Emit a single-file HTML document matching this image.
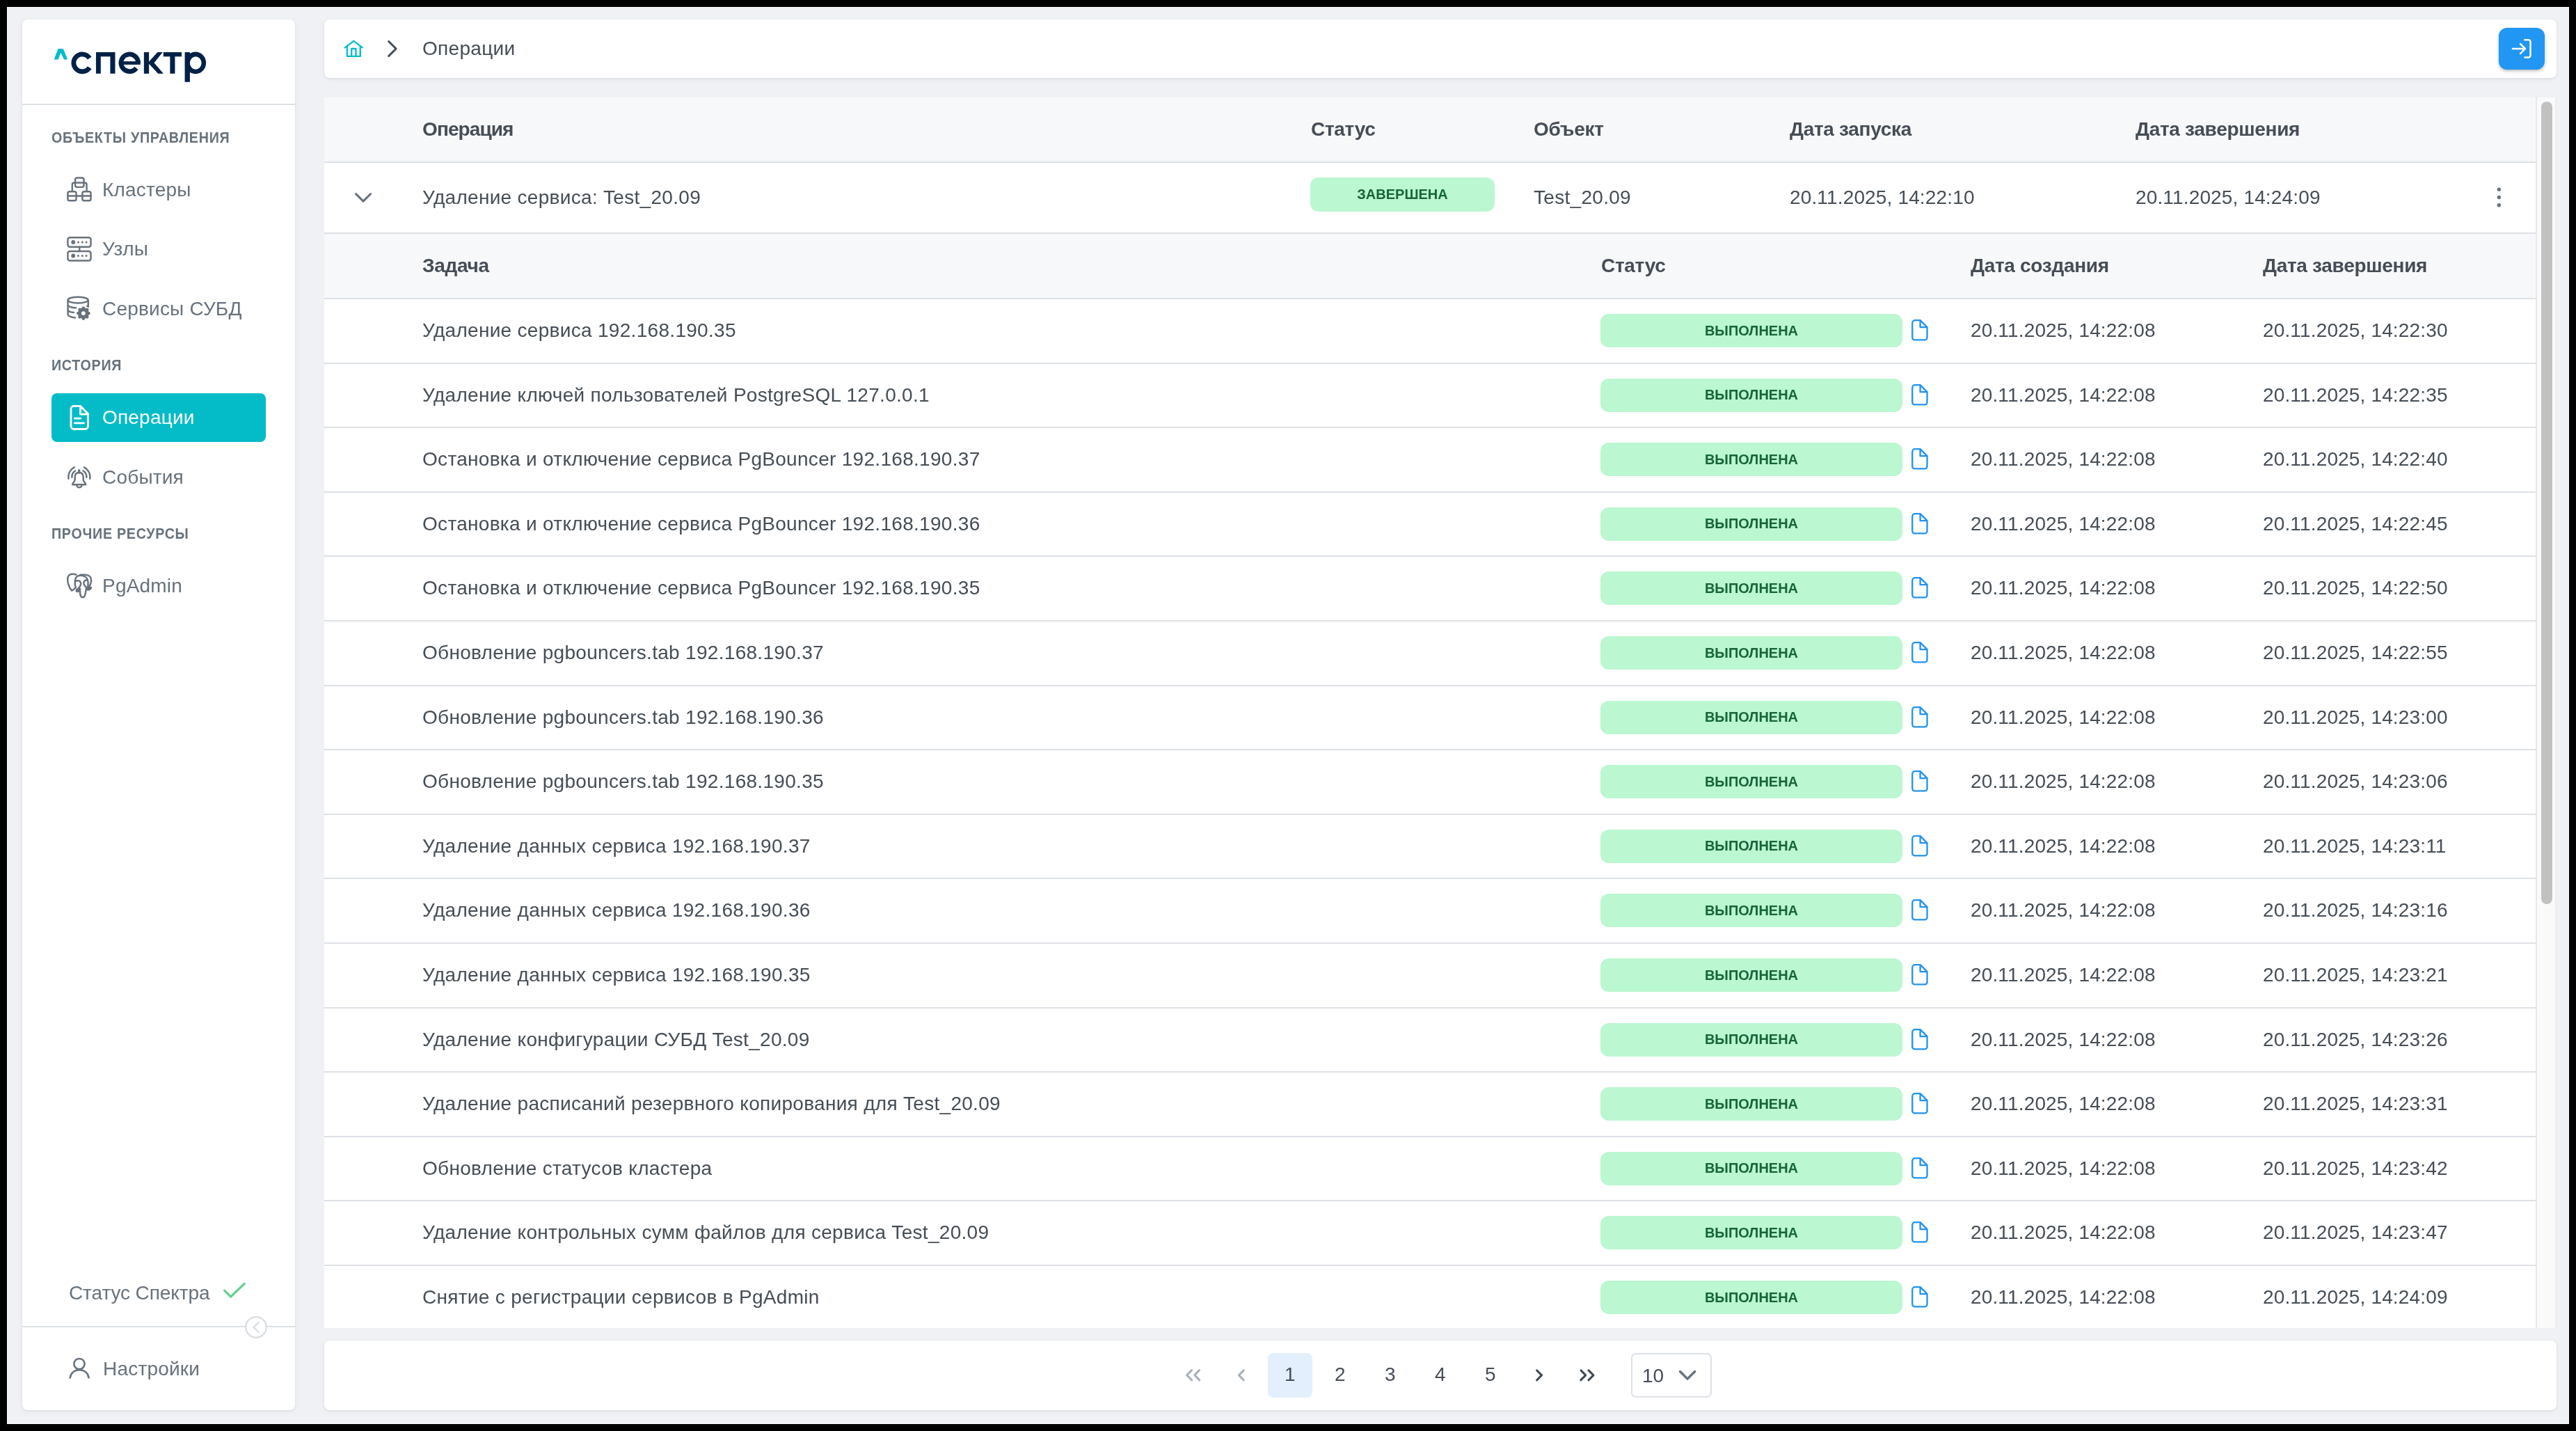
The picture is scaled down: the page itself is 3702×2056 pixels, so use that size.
<!DOCTYPE html>
<html><head><meta charset="utf-8"><style>
*{box-sizing:content-box;}
html,body{margin:0;padding:0;}
body{width:3702px;height:2056px;background:#000;position:relative;overflow:hidden;font-family:"Liberation Sans",sans-serif;}
#app{position:absolute;left:0;top:0;width:3702px;height:2056px;will-change:transform;}
#frame{position:absolute;left:10px;top:10px;width:3680px;height:2034px;border:1px solid #fdfdfe;background:#eff1f4;}
.card{position:absolute;background:#fff;border-radius:8px;box-shadow:0 1px 3px rgba(30,40,60,0.07),0 2px 8px rgba(30,40,60,0.05);}
.ic{position:absolute;overflow:visible;}
.hl{position:absolute;height:2px;background:#dde1e6;}
.t28,.nav,.th,.sec{position:absolute;white-space:nowrap;}
.t28{font-size:28px;line-height:28px;color:#454d56;letter-spacing:0.3px;}
.nav{font-size:28px;line-height:28px;color:#67727c;letter-spacing:0.2px;}
.th{font-size:28px;line-height:28px;color:#454d56;font-weight:bold;letter-spacing:-0.3px;}
.sec{font-size:22px;line-height:22px;color:#67727c;font-weight:bold;letter-spacing:0.8px;transform:scaleX(0.895);transform-origin:0 0;}
.badge{position:absolute;background:#bbf7d0;color:#16653a;border-radius:12px;font-size:20px;font-weight:bold;display:flex;align-items:center;justify-content:center;letter-spacing:0px;}
.row{position:absolute;left:0;width:3178px;height:92.6px;}
</style></head>
<body><div id="app"><div id="frame"></div>
<div class="card" style="left:32px;top:28px;width:392px;height:1998px;"></div><svg class="ic" style="left:60px;top:50px;width:260px;height:80px;" viewBox="0 0 2576 793"><g fill="#002147">
<path d="M680.2,333 A123,123 0 1 0 680.2,467" fill="none" stroke="#002147" stroke-width="68"/>
<path d="M772,248 H1045 V553 H975 V310 H840 V553 H772 Z"/>
<path d="M1373,401 A122,122 0 1 0 1347,475" fill="none" stroke="#002147" stroke-width="67"/>
<rect x="1160" y="378" width="245" height="47"/>
<rect x="1455" y="248" width="72" height="305"/>
<polygon points="1520,388 1649,249 1722,249 1600,400 1733,552 1657,552 1520,407"/>
<path d="M1732,248 H1992 V310 H1897 V553 H1827 V310 H1732 Z"/>
<rect x="2037" y="248" width="73" height="424"/>
<path fill-rule="evenodd" d="M2040,400 A150,157 0 1 0 2340,400 A150,157 0 1 0 2040,400 Z M2109,402 A83,92 0 1 0 2275,402 A83,92 0 1 0 2109,402 Z"/>
</g>
<polygon fill="#00bccb" points="232,198 305,198 368,353 318,353 269,258 233,353 175,353"/></svg><div class="hl" style="left:32px;top:149px;width:392px;"></div><div class="sec" style="left:74px;top:187px;">ОБЪЕКТЫ УПРАВЛЕНИЯ</div><div class="sec" style="left:74px;top:514px;">ИСТОРИЯ</div><div class="sec" style="left:74px;top:756px;">ПРОЧИЕ РЕСУРСЫ</div><svg class="ic" style="left:86px;top:240px;width:60px;height:60px;" viewBox="0 0 1431 1431"><g fill="none" stroke="#67727c" stroke-width="58" stroke-linecap="round" stroke-linejoin="round">
<rect x="527" y="368" width="296" height="320" rx="60"/>
<path d="M527,535 H823"/>
<path d="M425,810 V600 A65,65 0 0 1 490,535 H527 M823,535 H855 A65,65 0 0 1 920,600 V810"/>
<rect x="272" y="842" width="290" height="310" rx="60"/>
<rect x="772" y="842" width="290" height="310" rx="60"/>
<path d="M272,990 H1062"/>
</g></svg><div class="nav" style="left:147px;top:259px;">Кластеры</div><svg class="ic" style="left:86px;top:326px;width:60px;height:60px;" viewBox="0 0 1431 1431"><g fill="none" stroke="#67727c" stroke-width="58" stroke-linecap="round" stroke-linejoin="round">
<rect x="272" y="365" width="790" height="322" rx="70"/>
<rect x="272" y="835" width="790" height="322" rx="70"/>
<path d="M675,690 V835"/>
</g><g fill="#67727c">
<circle cx="458" cy="525" r="70"/><circle cx="630" cy="525" r="36"/><circle cx="770" cy="525" r="36"/><circle cx="908" cy="525" r="36"/>
<circle cx="458" cy="990" r="70"/><circle cx="630" cy="990" r="36"/><circle cx="770" cy="990" r="36"/><circle cx="908" cy="990" r="36"/>
</g></svg><div class="nav" style="left:147px;top:344px;">Узлы</div><svg class="ic" style="left:86px;top:412px;width:60px;height:60px;" viewBox="0 0 1431 1431"><g fill="none" stroke="#67727c" stroke-width="58">
<ellipse cx="622" cy="455" rx="347" ry="105"/>
<path d="M275,455 V940 C275,1000 400,1045 550,1065"/>
<path d="M275,635 C300,690 420,718 580,725"/>
<path d="M275,800 C300,855 390,878 498,882"/>
<path d="M972,455 V675 L915,655"/>
</g><path fill="#67727c" fill-rule="evenodd" d="M994,859 L1037,870 L1037,946 L994,957 L974,1004 L997,1043 L943,1097 L904,1074 L857,1094 L846,1137 L770,1137 L759,1094 L712,1074 L673,1097 L619,1043 L642,1004 L622,957 L579,946 L579,870 L622,859 L642,812 L619,773 L673,719 L712,742 L759,722 L770,679 L846,679 L857,722 L904,742 L943,719 L997,773 L974,812 Z M738,908 A70,70 0 1 0 878,908 A70,70 0 1 0 738,908 Z"/></svg><div class="nav" style="left:147px;top:430px;">Сервисы СУБД</div><div style="position:absolute;left:74px;top:565px;width:308px;height:70px;background:#03bcc8;border-radius:8px;"></div><svg class="ic" style="left:86px;top:570px;width:60px;height:60px;" viewBox="0 0 1431 1431"><g fill="none" stroke="#fff" stroke-width="68" stroke-linecap="round" stroke-linejoin="round">
<path d="M705,320 H480 A100,100 0 0 0 380,420 V1010 A100,100 0 0 0 480,1110 H865 A100,100 0 0 0 965,1010 V585 Z"/>
<path d="M705,320 V600 H965"/>
<path d="M510,742 H712"/><path d="M510,902 H822"/>
</g></svg><div class="nav" style="left:147px;top:586px;color:#fff">Операции</div><svg class="ic" style="left:86px;top:656px;width:60px;height:60px;" viewBox="0 0 1431 1431"><g fill="none" stroke="#67727c" stroke-width="58" stroke-linecap="round" stroke-linejoin="round">
<path d="M660,550 C568,550 515,618 515,720 V800 C515,855 432,900 432,962 H888 C888,900 805,855 805,800 V720 C805,618 752,550 660,550 Z"/>
<path d="M660,470 V550" stroke-width="78"/>
<path d="M580,992 A85,66 0 0 0 750,992"/>
<path d="M528,488 A250,250 0 0 0 414,712"/>
<path d="M495,366 A375,375 0 0 0 297,760"/>
<path d="M800,488 A250,250 0 0 1 914,712"/>
<path d="M835,366 A375,375 0 0 1 1033,760"/>
</g></svg><div class="nav" style="left:147px;top:672px;">События</div><svg class="ic" style="left:86px;top:812px;width:60px;height:60px;" viewBox="0 0 1431 1431"><g fill="none" stroke="#67727c" stroke-width="58" stroke-linecap="round" stroke-linejoin="round">
<path d="M565,325 C450,295 320,300 280,400 C240,520 300,760 410,875 C470,860 510,800 545,760"/>
<path d="M545,760 C505,650 495,470 590,385 C690,320 880,350 945,480 C975,560 968,700 960,770"/>
<path d="M690,335 C800,320 990,300 1060,430 C1090,540 1050,680 990,770 H1075 C1050,850 960,865 905,800"/>
<path d="M690,810 C690,930 680,1100 785,1105 C880,1105 880,920 905,800"/>
<path d="M530,550 C600,515 705,520 720,620 C725,700 670,760 630,800 C580,820 560,860 575,900 C620,920 680,880 690,810"/>
<path d="M955,520 C860,495 800,560 822,640 C845,705 905,760 960,775"/>
</g><g fill="#67727c"><path d="M565,880 C560,835 620,815 700,812 V905 C640,925 572,915 565,880 Z"/><path d="M905,785 H1085 C1065,850 995,872 925,872 Z"/></g></svg><div class="nav" style="left:147px;top:828px;">PgAdmin</div><div class="nav" style="left:99px;top:1844px;letter-spacing:-0.1px">Статус Спектра</div><svg class="ic" style="left:310px;top:1830px;width:80px;height:100px;" viewBox="0 0 1145 1431"><path d="M180,345 L310,475 L590,205" fill="none" stroke="#5fd08a" stroke-width="45" stroke-linecap="round" stroke-linejoin="round"/></svg><div class="hl" style="left:32px;top:1905px;width:392px;"></div><svg class="ic" style="left:310px;top:1830px;width:80px;height:100px;" viewBox="0 0 1145 1431"><circle cx="830" cy="1100" r="212" fill="#fff" stroke="#d9dee3" stroke-width="33"/>
<path d="M885,1000 L780,1100 L885,1205" fill="none" stroke="#d9dee3" stroke-width="33" stroke-linecap="round" stroke-linejoin="round"/></svg><svg class="ic" style="left:100px;top:1940px;width:50px;height:50px;" viewBox="0 0 1431 1431"><g fill="none" stroke="#67727c" stroke-width="75" stroke-linecap="round">
<circle cx="400" cy="560" r="218"/>
<path d="M20,1130 C60,920 220,810 405,810 C590,810 750,920 790,1130"/>
</g></svg><div class="nav" style="left:148px;top:1953px;">Настройки</div><div class="card" style="left:466px;top:28px;width:3208px;height:84px;"></div><svg class="ic" style="left:484px;top:40px;width:100px;height:60px;" viewBox="0 0 2385 1431"><g fill="none" stroke="#03bcc8" stroke-width="55" stroke-linecap="round" stroke-linejoin="round">
<path d="M280,675 L580,450 L880,675"/><path d="M355,640 V975 H805 V640"/><path d="M505,975 V715 H655 V975"/></g>
<path d="M1780,465 L2030,715 L1780,965" fill="none" stroke="#434c56" stroke-width="72" stroke-linecap="round" stroke-linejoin="round"/></svg><div class="t28" style="left:607px;top:56px;">Операции</div><div style="position:absolute;left:3591px;top:40px;width:66px;height:60px;background:#2196f3;border-radius:12px;box-shadow:0 2px 4px rgba(0,0,0,0.28);"></div><svg class="ic" style="left:3590px;top:40px;width:70px;height:60px;" viewBox="0 0 1670 1431"><g fill="none" stroke="#fff" stroke-width="60" stroke-linecap="round" stroke-linejoin="round">
<path d="M500,715 H925"/><path d="M765,550 L930,715 L765,880"/><path d="M915,410 H1040 A70,70 0 0 1 1110,480 V945 A70,70 0 0 1 1040,1015 H915"/></g></svg><div style="position:absolute;left:466px;top:140px;width:3208px;height:1768px;background:#fff;overflow:hidden;"><div style="position:absolute;left:0;top:0;width:3178px;height:92px;background:#f7f8fa;"></div><div class="hl" style="left:0;top:92px;width:3178px;"></div><div class="th" style="left:141px;top:32px;letter-spacing:-0.9px">Операция</div><div class="th" style="left:1418px;top:32px;">Статус</div><div class="th" style="left:1738px;top:32px;">Объект</div><div class="th" style="left:2106px;top:32px;">Дата запуска</div><div class="th" style="left:2603px;top:32px;">Дата завершения</div><div class="hl" style="left:0;top:194px;width:3178px;"></div><svg class="ic" style="left:24px;top:110px;width:70px;height:70px;" viewBox="0 0 1431 1431"><path d="M440,585 L655,800 L870,585" fill="none" stroke="#67727c" stroke-width="60" stroke-linecap="round" stroke-linejoin="round"/></svg><div class="t28" style="left:141px;top:130px;">Удаление сервиса: Test_20.09</div><div class="badge" style="left:1417px;top:115px;width:265px;height:49px;">ЗАВЕРШЕНА</div><div class="t28" style="left:1738px;top:130px;">Test_20.09</div><div class="t28" style="left:2106px;top:130px;letter-spacing:0.15px">20.11.2025, 14:22:10</div><div class="t28" style="left:2603px;top:130px;letter-spacing:0.15px">20.11.2025, 14:24:09</div><svg class="ic" style="left:3094px;top:110px;width:60px;height:60px;" viewBox="0 0 1431 1431"><g fill="#67727c"><circle cx="748" cy="528" r="64"/><circle cx="748" cy="800" r="64"/><circle cx="748" cy="1068" r="64"/></g></svg><div style="position:absolute;left:0;top:196px;width:3178px;height:92px;background:#f7f8fa;"></div><div class="hl" style="left:0;top:288px;width:3178px;"></div><div class="th" style="left:141px;top:228px;">Задача</div><div class="th" style="left:1835px;top:228px;">Статус</div><div class="th" style="left:2366px;top:228px;">Дата создания</div><div class="th" style="left:2786px;top:228px;">Дата завершения</div><div class="row" style="top:290.00px;"><div class="t28" style="left:141px;top:31px;">Удаление сервиса 192.168.190.35</div><div class="badge" style="left:1834px;top:21px;width:434px;height:48px;">ВЫПОЛНЕНА</div><svg class="ic" style="left:2270px;top:20px;width:50px;height:50px;" viewBox="0 0 1431 1431"><path d="M675,290 H460 A110,110 0 0 0 350,400 V1000 A100,100 0 0 0 450,1100 H860 A100,100 0 0 0 960,1000 V575 Z M675,290 V578 H960" fill="none" stroke="#2192f3" stroke-width="66" stroke-linejoin="round" stroke-linecap="round"/></svg><div class="t28" style="left:2366px;top:31px;letter-spacing:0.15px">20.11.2025, 14:22:08</div><div class="t28" style="left:2786px;top:31px;letter-spacing:0.15px">20.11.2025, 14:22:30</div><div class="hl" style="left:0;top:90.6px;width:3178px;"></div></div><div class="row" style="top:382.60px;"><div class="t28" style="left:141px;top:31px;">Удаление ключей пользователей PostgreSQL 127.0.0.1</div><div class="badge" style="left:1834px;top:21px;width:434px;height:48px;">ВЫПОЛНЕНА</div><svg class="ic" style="left:2270px;top:20px;width:50px;height:50px;" viewBox="0 0 1431 1431"><path d="M675,290 H460 A110,110 0 0 0 350,400 V1000 A100,100 0 0 0 450,1100 H860 A100,100 0 0 0 960,1000 V575 Z M675,290 V578 H960" fill="none" stroke="#2192f3" stroke-width="66" stroke-linejoin="round" stroke-linecap="round"/></svg><div class="t28" style="left:2366px;top:31px;letter-spacing:0.15px">20.11.2025, 14:22:08</div><div class="t28" style="left:2786px;top:31px;letter-spacing:0.15px">20.11.2025, 14:22:35</div><div class="hl" style="left:0;top:90.6px;width:3178px;"></div></div><div class="row" style="top:475.20px;"><div class="t28" style="left:141px;top:31px;">Остановка и отключение сервиса PgBouncer 192.168.190.37</div><div class="badge" style="left:1834px;top:21px;width:434px;height:48px;">ВЫПОЛНЕНА</div><svg class="ic" style="left:2270px;top:20px;width:50px;height:50px;" viewBox="0 0 1431 1431"><path d="M675,290 H460 A110,110 0 0 0 350,400 V1000 A100,100 0 0 0 450,1100 H860 A100,100 0 0 0 960,1000 V575 Z M675,290 V578 H960" fill="none" stroke="#2192f3" stroke-width="66" stroke-linejoin="round" stroke-linecap="round"/></svg><div class="t28" style="left:2366px;top:31px;letter-spacing:0.15px">20.11.2025, 14:22:08</div><div class="t28" style="left:2786px;top:31px;letter-spacing:0.15px">20.11.2025, 14:22:40</div><div class="hl" style="left:0;top:90.6px;width:3178px;"></div></div><div class="row" style="top:567.80px;"><div class="t28" style="left:141px;top:31px;">Остановка и отключение сервиса PgBouncer 192.168.190.36</div><div class="badge" style="left:1834px;top:21px;width:434px;height:48px;">ВЫПОЛНЕНА</div><svg class="ic" style="left:2270px;top:20px;width:50px;height:50px;" viewBox="0 0 1431 1431"><path d="M675,290 H460 A110,110 0 0 0 350,400 V1000 A100,100 0 0 0 450,1100 H860 A100,100 0 0 0 960,1000 V575 Z M675,290 V578 H960" fill="none" stroke="#2192f3" stroke-width="66" stroke-linejoin="round" stroke-linecap="round"/></svg><div class="t28" style="left:2366px;top:31px;letter-spacing:0.15px">20.11.2025, 14:22:08</div><div class="t28" style="left:2786px;top:31px;letter-spacing:0.15px">20.11.2025, 14:22:45</div><div class="hl" style="left:0;top:90.6px;width:3178px;"></div></div><div class="row" style="top:660.40px;"><div class="t28" style="left:141px;top:31px;">Остановка и отключение сервиса PgBouncer 192.168.190.35</div><div class="badge" style="left:1834px;top:21px;width:434px;height:48px;">ВЫПОЛНЕНА</div><svg class="ic" style="left:2270px;top:20px;width:50px;height:50px;" viewBox="0 0 1431 1431"><path d="M675,290 H460 A110,110 0 0 0 350,400 V1000 A100,100 0 0 0 450,1100 H860 A100,100 0 0 0 960,1000 V575 Z M675,290 V578 H960" fill="none" stroke="#2192f3" stroke-width="66" stroke-linejoin="round" stroke-linecap="round"/></svg><div class="t28" style="left:2366px;top:31px;letter-spacing:0.15px">20.11.2025, 14:22:08</div><div class="t28" style="left:2786px;top:31px;letter-spacing:0.15px">20.11.2025, 14:22:50</div><div class="hl" style="left:0;top:90.6px;width:3178px;"></div></div><div class="row" style="top:753.00px;"><div class="t28" style="left:141px;top:31px;">Обновление pgbouncers.tab 192.168.190.37</div><div class="badge" style="left:1834px;top:21px;width:434px;height:48px;">ВЫПОЛНЕНА</div><svg class="ic" style="left:2270px;top:20px;width:50px;height:50px;" viewBox="0 0 1431 1431"><path d="M675,290 H460 A110,110 0 0 0 350,400 V1000 A100,100 0 0 0 450,1100 H860 A100,100 0 0 0 960,1000 V575 Z M675,290 V578 H960" fill="none" stroke="#2192f3" stroke-width="66" stroke-linejoin="round" stroke-linecap="round"/></svg><div class="t28" style="left:2366px;top:31px;letter-spacing:0.15px">20.11.2025, 14:22:08</div><div class="t28" style="left:2786px;top:31px;letter-spacing:0.15px">20.11.2025, 14:22:55</div><div class="hl" style="left:0;top:90.6px;width:3178px;"></div></div><div class="row" style="top:845.60px;"><div class="t28" style="left:141px;top:31px;">Обновление pgbouncers.tab 192.168.190.36</div><div class="badge" style="left:1834px;top:21px;width:434px;height:48px;">ВЫПОЛНЕНА</div><svg class="ic" style="left:2270px;top:20px;width:50px;height:50px;" viewBox="0 0 1431 1431"><path d="M675,290 H460 A110,110 0 0 0 350,400 V1000 A100,100 0 0 0 450,1100 H860 A100,100 0 0 0 960,1000 V575 Z M675,290 V578 H960" fill="none" stroke="#2192f3" stroke-width="66" stroke-linejoin="round" stroke-linecap="round"/></svg><div class="t28" style="left:2366px;top:31px;letter-spacing:0.15px">20.11.2025, 14:22:08</div><div class="t28" style="left:2786px;top:31px;letter-spacing:0.15px">20.11.2025, 14:23:00</div><div class="hl" style="left:0;top:90.6px;width:3178px;"></div></div><div class="row" style="top:938.20px;"><div class="t28" style="left:141px;top:31px;">Обновление pgbouncers.tab 192.168.190.35</div><div class="badge" style="left:1834px;top:21px;width:434px;height:48px;">ВЫПОЛНЕНА</div><svg class="ic" style="left:2270px;top:20px;width:50px;height:50px;" viewBox="0 0 1431 1431"><path d="M675,290 H460 A110,110 0 0 0 350,400 V1000 A100,100 0 0 0 450,1100 H860 A100,100 0 0 0 960,1000 V575 Z M675,290 V578 H960" fill="none" stroke="#2192f3" stroke-width="66" stroke-linejoin="round" stroke-linecap="round"/></svg><div class="t28" style="left:2366px;top:31px;letter-spacing:0.15px">20.11.2025, 14:22:08</div><div class="t28" style="left:2786px;top:31px;letter-spacing:0.15px">20.11.2025, 14:23:06</div><div class="hl" style="left:0;top:90.6px;width:3178px;"></div></div><div class="row" style="top:1030.80px;"><div class="t28" style="left:141px;top:31px;">Удаление данных сервиса 192.168.190.37</div><div class="badge" style="left:1834px;top:21px;width:434px;height:48px;">ВЫПОЛНЕНА</div><svg class="ic" style="left:2270px;top:20px;width:50px;height:50px;" viewBox="0 0 1431 1431"><path d="M675,290 H460 A110,110 0 0 0 350,400 V1000 A100,100 0 0 0 450,1100 H860 A100,100 0 0 0 960,1000 V575 Z M675,290 V578 H960" fill="none" stroke="#2192f3" stroke-width="66" stroke-linejoin="round" stroke-linecap="round"/></svg><div class="t28" style="left:2366px;top:31px;letter-spacing:0.15px">20.11.2025, 14:22:08</div><div class="t28" style="left:2786px;top:31px;letter-spacing:0.15px">20.11.2025, 14:23:11</div><div class="hl" style="left:0;top:90.6px;width:3178px;"></div></div><div class="row" style="top:1123.40px;"><div class="t28" style="left:141px;top:31px;">Удаление данных сервиса 192.168.190.36</div><div class="badge" style="left:1834px;top:21px;width:434px;height:48px;">ВЫПОЛНЕНА</div><svg class="ic" style="left:2270px;top:20px;width:50px;height:50px;" viewBox="0 0 1431 1431"><path d="M675,290 H460 A110,110 0 0 0 350,400 V1000 A100,100 0 0 0 450,1100 H860 A100,100 0 0 0 960,1000 V575 Z M675,290 V578 H960" fill="none" stroke="#2192f3" stroke-width="66" stroke-linejoin="round" stroke-linecap="round"/></svg><div class="t28" style="left:2366px;top:31px;letter-spacing:0.15px">20.11.2025, 14:22:08</div><div class="t28" style="left:2786px;top:31px;letter-spacing:0.15px">20.11.2025, 14:23:16</div><div class="hl" style="left:0;top:90.6px;width:3178px;"></div></div><div class="row" style="top:1216.00px;"><div class="t28" style="left:141px;top:31px;">Удаление данных сервиса 192.168.190.35</div><div class="badge" style="left:1834px;top:21px;width:434px;height:48px;">ВЫПОЛНЕНА</div><svg class="ic" style="left:2270px;top:20px;width:50px;height:50px;" viewBox="0 0 1431 1431"><path d="M675,290 H460 A110,110 0 0 0 350,400 V1000 A100,100 0 0 0 450,1100 H860 A100,100 0 0 0 960,1000 V575 Z M675,290 V578 H960" fill="none" stroke="#2192f3" stroke-width="66" stroke-linejoin="round" stroke-linecap="round"/></svg><div class="t28" style="left:2366px;top:31px;letter-spacing:0.15px">20.11.2025, 14:22:08</div><div class="t28" style="left:2786px;top:31px;letter-spacing:0.15px">20.11.2025, 14:23:21</div><div class="hl" style="left:0;top:90.6px;width:3178px;"></div></div><div class="row" style="top:1308.60px;"><div class="t28" style="left:141px;top:31px;">Удаление конфигурации СУБД Test_20.09</div><div class="badge" style="left:1834px;top:21px;width:434px;height:48px;">ВЫПОЛНЕНА</div><svg class="ic" style="left:2270px;top:20px;width:50px;height:50px;" viewBox="0 0 1431 1431"><path d="M675,290 H460 A110,110 0 0 0 350,400 V1000 A100,100 0 0 0 450,1100 H860 A100,100 0 0 0 960,1000 V575 Z M675,290 V578 H960" fill="none" stroke="#2192f3" stroke-width="66" stroke-linejoin="round" stroke-linecap="round"/></svg><div class="t28" style="left:2366px;top:31px;letter-spacing:0.15px">20.11.2025, 14:22:08</div><div class="t28" style="left:2786px;top:31px;letter-spacing:0.15px">20.11.2025, 14:23:26</div><div class="hl" style="left:0;top:90.6px;width:3178px;"></div></div><div class="row" style="top:1401.20px;"><div class="t28" style="left:141px;top:31px;">Удаление расписаний резервного копирования для Test_20.09</div><div class="badge" style="left:1834px;top:21px;width:434px;height:48px;">ВЫПОЛНЕНА</div><svg class="ic" style="left:2270px;top:20px;width:50px;height:50px;" viewBox="0 0 1431 1431"><path d="M675,290 H460 A110,110 0 0 0 350,400 V1000 A100,100 0 0 0 450,1100 H860 A100,100 0 0 0 960,1000 V575 Z M675,290 V578 H960" fill="none" stroke="#2192f3" stroke-width="66" stroke-linejoin="round" stroke-linecap="round"/></svg><div class="t28" style="left:2366px;top:31px;letter-spacing:0.15px">20.11.2025, 14:22:08</div><div class="t28" style="left:2786px;top:31px;letter-spacing:0.15px">20.11.2025, 14:23:31</div><div class="hl" style="left:0;top:90.6px;width:3178px;"></div></div><div class="row" style="top:1493.80px;"><div class="t28" style="left:141px;top:31px;">Обновление статусов кластера</div><div class="badge" style="left:1834px;top:21px;width:434px;height:48px;">ВЫПОЛНЕНА</div><svg class="ic" style="left:2270px;top:20px;width:50px;height:50px;" viewBox="0 0 1431 1431"><path d="M675,290 H460 A110,110 0 0 0 350,400 V1000 A100,100 0 0 0 450,1100 H860 A100,100 0 0 0 960,1000 V575 Z M675,290 V578 H960" fill="none" stroke="#2192f3" stroke-width="66" stroke-linejoin="round" stroke-linecap="round"/></svg><div class="t28" style="left:2366px;top:31px;letter-spacing:0.15px">20.11.2025, 14:22:08</div><div class="t28" style="left:2786px;top:31px;letter-spacing:0.15px">20.11.2025, 14:23:42</div><div class="hl" style="left:0;top:90.6px;width:3178px;"></div></div><div class="row" style="top:1586.40px;"><div class="t28" style="left:141px;top:31px;">Удаление контрольных сумм файлов для сервиса Test_20.09</div><div class="badge" style="left:1834px;top:21px;width:434px;height:48px;">ВЫПОЛНЕНА</div><svg class="ic" style="left:2270px;top:20px;width:50px;height:50px;" viewBox="0 0 1431 1431"><path d="M675,290 H460 A110,110 0 0 0 350,400 V1000 A100,100 0 0 0 450,1100 H860 A100,100 0 0 0 960,1000 V575 Z M675,290 V578 H960" fill="none" stroke="#2192f3" stroke-width="66" stroke-linejoin="round" stroke-linecap="round"/></svg><div class="t28" style="left:2366px;top:31px;letter-spacing:0.15px">20.11.2025, 14:22:08</div><div class="t28" style="left:2786px;top:31px;letter-spacing:0.15px">20.11.2025, 14:23:47</div><div class="hl" style="left:0;top:90.6px;width:3178px;"></div></div><div class="row" style="top:1679.00px;"><div class="t28" style="left:141px;top:31px;">Снятие с регистрации сервисов в PgAdmin</div><div class="badge" style="left:1834px;top:21px;width:434px;height:48px;">ВЫПОЛНЕНА</div><svg class="ic" style="left:2270px;top:20px;width:50px;height:50px;" viewBox="0 0 1431 1431"><path d="M675,290 H460 A110,110 0 0 0 350,400 V1000 A100,100 0 0 0 450,1100 H860 A100,100 0 0 0 960,1000 V575 Z M675,290 V578 H960" fill="none" stroke="#2192f3" stroke-width="66" stroke-linejoin="round" stroke-linecap="round"/></svg><div class="t28" style="left:2366px;top:31px;letter-spacing:0.15px">20.11.2025, 14:22:08</div><div class="t28" style="left:2786px;top:31px;letter-spacing:0.15px">20.11.2025, 14:24:09</div><div class="hl" style="left:0;top:90.6px;width:3178px;"></div></div><div style="position:absolute;left:3178px;top:0;width:26px;height:1768px;background:#fafafa;border-left:2px solid #e8e8e8;border-right:2px solid #ececec;"></div><div style="position:absolute;left:3186px;top:6px;width:16px;height:1153px;background:#c1c1c1;border-radius:8px;"></div></div><div class="card" style="left:466px;top:1926px;width:3208px;height:100px;"></div><div style="position:absolute;left:1822px;top:1944px;width:64px;height:64px;background:#e3effc;border-radius:8px;"></div><div class="t28" style="left:1814px;top:1961px;width:80px;text-align:center;">1</div><div class="t28" style="left:1886px;top:1961px;width:80px;text-align:center;">2</div><div class="t28" style="left:1958px;top:1961px;width:80px;text-align:center;">3</div><div class="t28" style="left:2030px;top:1961px;width:80px;text-align:center;">4</div><div class="t28" style="left:2102px;top:1961px;width:80px;text-align:center;">5</div><svg class="ic" style="left:1690px;top:1950px;width:120px;height:50px;" viewBox="0 0 2576 1073"><g fill="none" stroke="#a7b1bb" stroke-width="64" stroke-linecap="round" stroke-linejoin="round">
<path d="M485,400 L335,550 L490,705"/><path d="M720,400 L575,550 L725,705"/><path d="M2090,405 L1940,555 L2090,705"/></g></svg><svg class="ic" style="left:2190px;top:1950px;width:120px;height:50px;" viewBox="0 0 2576 1073"><g fill="none" stroke="#3f4953" stroke-width="64" stroke-linecap="round" stroke-linejoin="round">
<path d="M400,405 L550,555 L400,705"/><path d="M1760,405 L1905,555 L1755,705"/><path d="M1995,405 L2145,555 L1995,705"/></g></svg><div style="position:absolute;left:2344px;top:1944px;width:112px;height:60px;border:2px solid #dde1e6;border-radius:7px;background:#fff;"></div><div class="t28" style="left:2360px;top:1963px;letter-spacing:0">10</div><svg class="ic" style="left:2330px;top:1935px;width:140px;height:80px;" viewBox="0 0 2504 1431"><path d="M1510,635 L1700,825 L1890,635" fill="none" stroke="#67727c" stroke-width="62" stroke-linecap="round" stroke-linejoin="round"/></svg>
</div></body></html>
